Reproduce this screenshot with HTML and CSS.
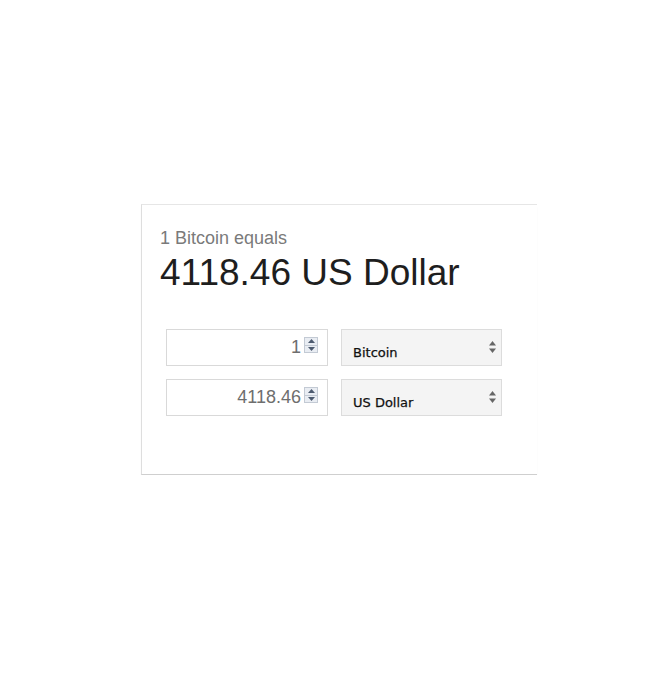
FILE: index.html
```html
<!DOCTYPE html>
<html>
<head>
<meta charset="utf-8">
<link rel="stylesheet" href="styles.css">
</head>
<body>
<div class="card">
  <div class="caption">1 Bitcoin equals</div>
  <div class="result">4118.46 US Dollar</div>
  <div class="rows">
    <div class="row">
      <div class="field">
        <span class="value">1</span>
        <span class="spin">
          <span class="half"><svg width="7" height="4" viewBox="0 0 7 4"><path d="M0 4 L3.5 0 L7 4 Z" fill="#4d5b70"/></svg></span>
          <span class="half"><svg width="7" height="4" viewBox="0 0 7 4"><path d="M0 0 L7 0 L3.5 4 Z" fill="#4d5b70"/></svg></span>
        </span>
      </div>
      <div class="select">
        <span class="label">Bitcoin</span>
        <svg class="arrows" width="7" height="12" viewBox="0 0 7 12"><path d="M0 4.5 L3.5 0 L7 4.5 Z" fill="#666"/><path d="M0 7.5 L7 7.5 L3.5 12 Z" fill="#666"/></svg>
      </div>
    </div>
    <div class="row">
      <div class="field">
        <span class="value">4118.46</span>
        <span class="spin">
          <span class="half"><svg width="7" height="4" viewBox="0 0 7 4"><path d="M0 4 L3.5 0 L7 4 Z" fill="#4d5b70"/></svg></span>
          <span class="half"><svg width="7" height="4" viewBox="0 0 7 4"><path d="M0 0 L7 0 L3.5 4 Z" fill="#4d5b70"/></svg></span>
        </span>
      </div>
      <div class="select">
        <span class="label">US Dollar</span>
        <svg class="arrows" width="7" height="12" viewBox="0 0 7 12"><path d="M0 4.5 L3.5 0 L7 4.5 Z" fill="#666"/><path d="M0 7.5 L7 7.5 L3.5 12 Z" fill="#666"/></svg>
      </div>
    </div>
  </div>
</div>
</body>
</html>
```
FILE: styles.css
```css
html, body {
  margin: 0;
  padding: 0;
  background: #fff;
}
body {
  padding-top: 204px;
  padding-left: 141px;
  font-family: "Liberation Sans", Arial, sans-serif;
}
.card {
  box-sizing: border-box;
  width: 396px;
  height: 271px;
  border-top: 1px solid #e6e6e6;
  border-left: 1px solid #dedede;
  border-bottom: 1px solid #cfcfcf;
  box-shadow: 0 2px 2px -1px rgba(0, 0, 0, 0.12);
  padding: 23px 0 0 18px;
}
.caption {
  font-size: 18px;
  line-height: 21px;
  color: #7a7a7a;
}
.result {
  margin-top: 4px;
  font-size: 37px;
  line-height: 40px;
  color: #1e1e1e;
}
.rows {
  margin-top: 36px;
  margin-left: 6px;
  display: flex;
  flex-direction: column;
  gap: 13px;
}
.row {
  display: flex;
  gap: 13px;
}
.field {
  box-sizing: border-box;
  width: 162px;
  height: 37px;
  border: 1px solid #d9d9d9;
  background: #fff;
  display: flex;
  justify-content: flex-end;
  align-items: flex-start;
  padding-right: 9px;
}
.value {
  font-size: 18px;
  line-height: 35px;
  color: #6e6e6e;
}
.spin {
  box-sizing: border-box;
  margin-left: 3px;
  margin-top: 7px;
  width: 14px;
  height: 16px;
  display: flex;
  flex-direction: column;
  border: 1px solid #c3cad4;
  background: #e9edf3;
}
.half {
  flex: 1;
  display: flex;
  align-items: center;
  justify-content: center;
}
.half + .half {
  border-top: 1px solid #c3cad4;
}
.half svg {
  display: block;
}
.select {
  box-sizing: border-box;
  width: 161px;
  height: 37px;
  border: 1px solid #dcdcdc;
  background: #f4f4f4;
  display: flex;
  align-items: center;
  justify-content: space-between;
  padding: 0 5px 0 11px;
}
.label {
  font-family: "DejaVu Sans", Verdana, sans-serif;
  font-size: 13px;
  line-height: 16px;
  padding-top: 10px;
  color: #111;
  -webkit-text-stroke: 0.25px #111;
}
.arrows {
  display: block;
  margin-top: -1px;
}
```
